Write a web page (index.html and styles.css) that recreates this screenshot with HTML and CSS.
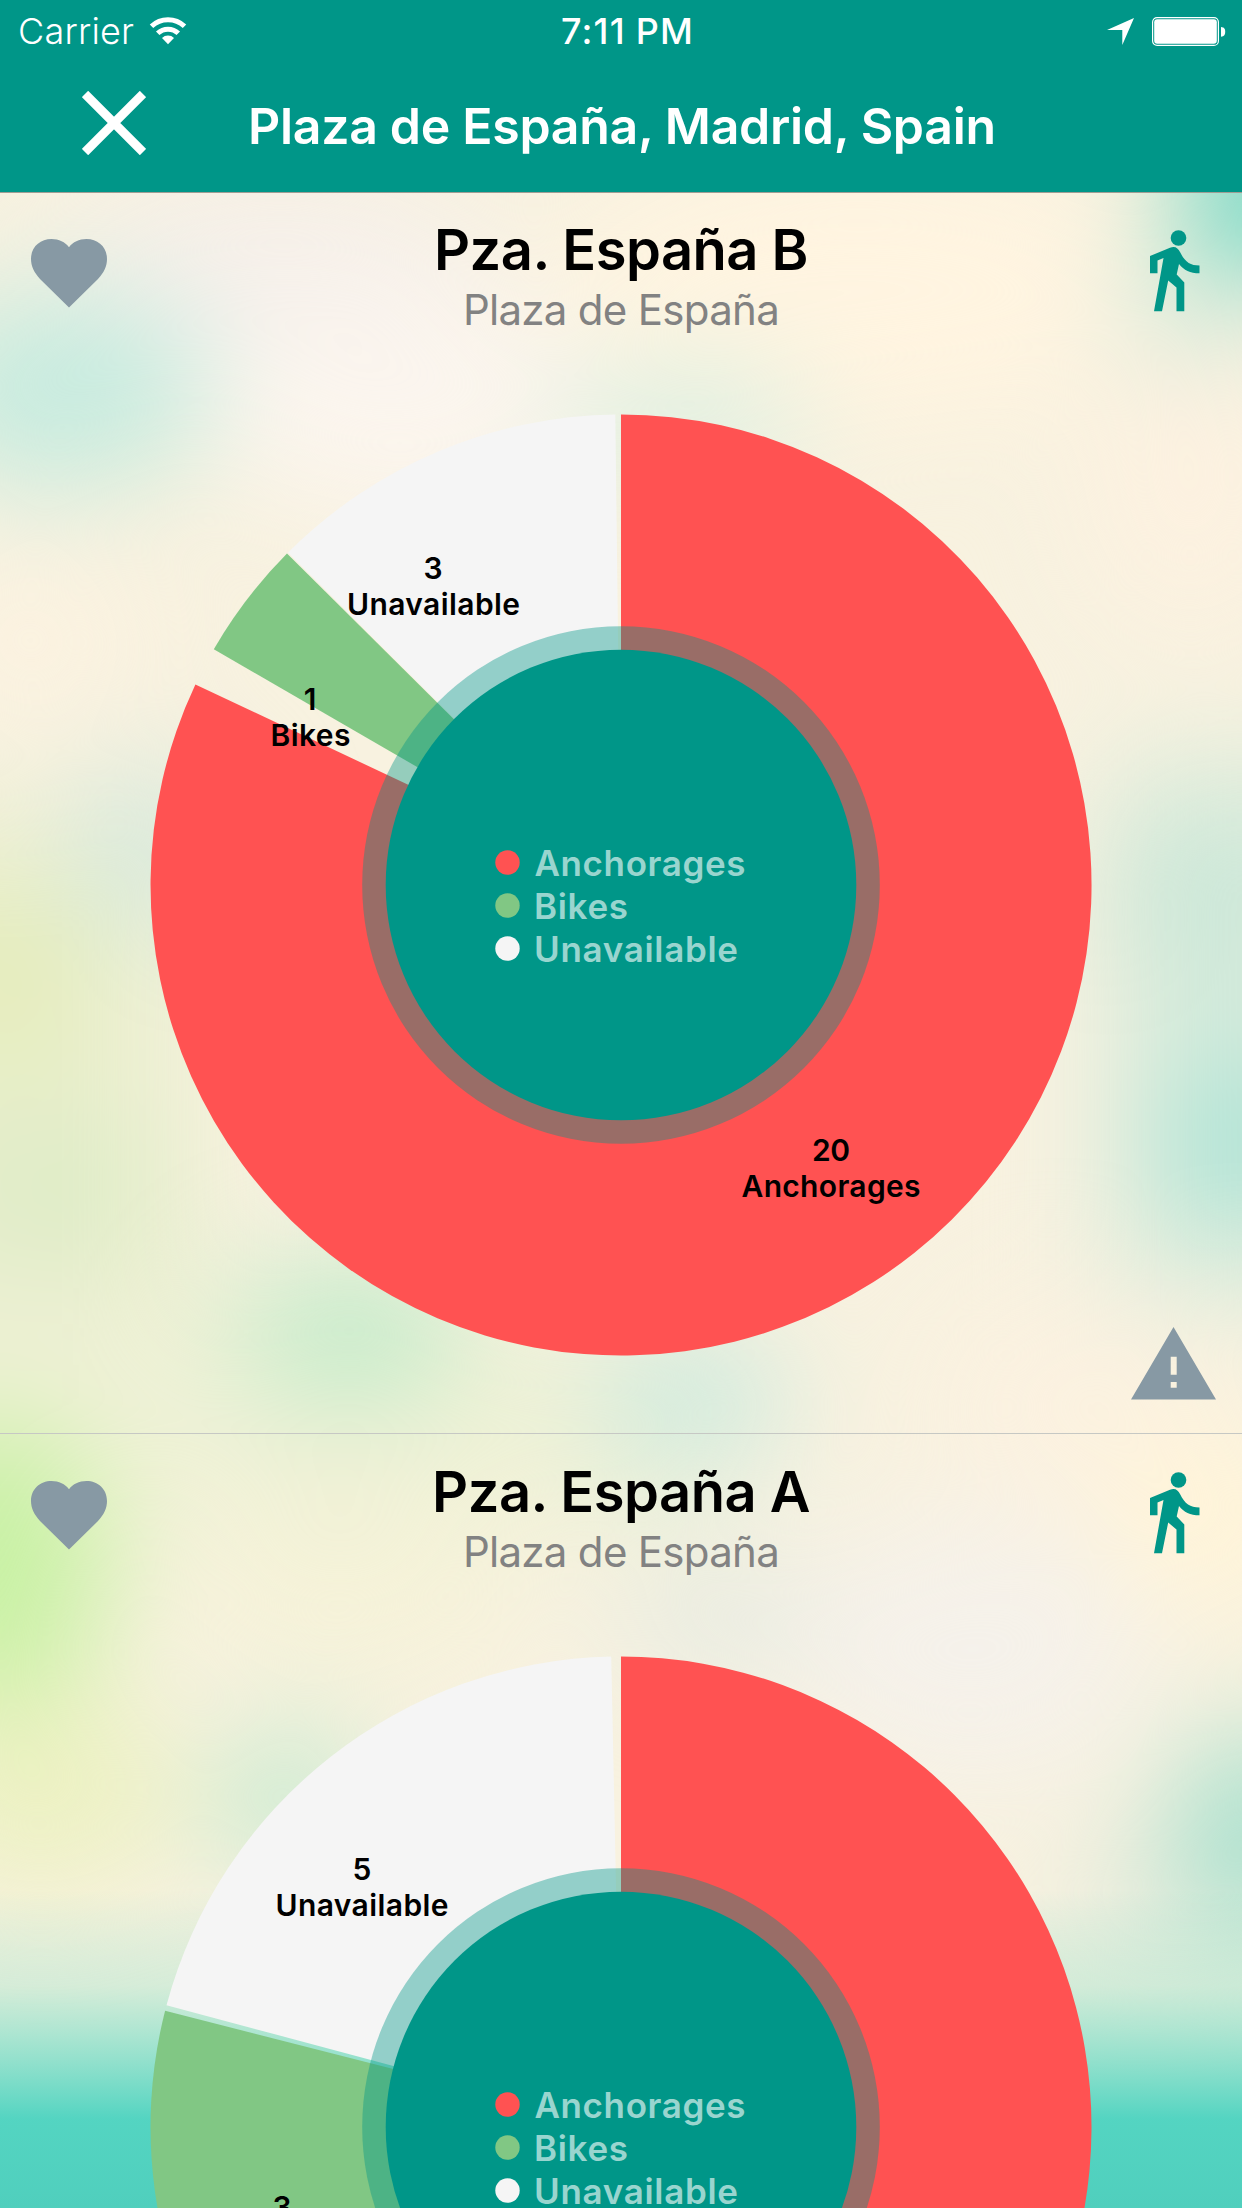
FILE: index.html
```html
<!DOCTYPE html>
<html lang="en">
<head>
<meta charset="utf-8">
<title>Plaza de España, Madrid, Spain</title>
<link rel="stylesheet" href="styles.css">
</head>
<body>
<div class="app">
  <header class="header">
    <div class="status">
      <div class="status-left">
        <span class="carrier">Carrier</span>
        <svg class="wifi" width="38" height="28" viewBox="0 0 38 28">
          <path class="arc" d="M2.500 9.300a24 24 0 0 1 33 0M8.700 16.300a15 15 0 0 1 20.600 0"/>
          <path class="fill" d="M19 27.300l-6-6.300a8.600 8.600 0 0 1 12 0z"/>
        </svg>
      </div>
      <span class="time">7:11 PM</span>
      <div class="status-right">
        <svg width="27" height="27" viewBox="0 0 27 27"><path class="fill" d="M0 12L27 0 15.300 27V12z"/></svg>
        <svg width="74" height="29" viewBox="0 0 74 29">
          <rect class="cell" x=".6" y=".6" width="65.800" height="27.800" rx="4.500"/>
          <rect class="fill" x="2.200" y="2.200" width="62.600" height="24.600" rx="3"/>
          <path class="fill" d="M69 10c3.200.2 4.200 2 4.200 4.700S72.200 19.500 69 19.700z"/>
        </svg>
      </div>
    </div>
    <div class="navbar">
      <svg class="close" width="64" height="64" viewBox="0 0 64 64"><path d="M3 3l58 58M61 3L3 61"/></svg>
      <h1 class="title">Plaza de España, Madrid, Spain</h1>
    </div>
  </header>

  <main class="list">
    <svg class="backdrop" width="1242" height="2016" viewBox="0 192 1242 2016">
      <defs>
        <filter id="soft" filterUnits="userSpaceOnUse" x="-300" y="-100" width="1842" height="2500" color-interpolation-filters="sRGB"><feGaussianBlur stdDeviation="58"/></filter>
        <linearGradient id="sea" x1="0" y1="0" x2="0" y2="1">
          <stop offset="0" stop-color="#4fd3bf" stop-opacity="0"/>
          <stop offset=".3" stop-color="#6fdcc4" stop-opacity=".25"/>
          <stop offset=".72" stop-color="#4bd3c0" stop-opacity=".95"/>
          <stop offset="1" stop-color="#50cfbd"/>
        </linearGradient>
      </defs>
      <rect x="0" y="192" width="1242" height="2016" fill="#f8f2e0"/>
      <g filter="url(#soft)">
        <rect x="-200" y="800" width="400" height="600" fill="#ecefd2"/>
        <rect x="1110" y="760" width="400" height="540" fill="#dcecdc"/>
        <rect x="-200" y="1330" width="900" height="200" fill="#eff1d6"/>
        <ellipse cx="280" cy="270" rx="220" ry="90" fill="#f5efea"/>
        <ellipse cx="400" cy="400" rx="200" ry="110" fill="#fbf5ee"/>
        <ellipse cx="860" cy="290" rx="300" ry="130" fill="#fff4e0"/>
        <ellipse cx="1190" cy="480" rx="110" ry="150" fill="#fcf1e0"/>
        <ellipse cx="60" cy="390" rx="150" ry="100" fill="#c6ebdf"/>
        <ellipse cx="1270" cy="190" rx="90" ry="80" fill="#68d5c2"/>
        <ellipse cx="1190" cy="310" rx="80" ry="50" fill="#d8eadb"/>
        <ellipse cx="680" cy="420" rx="130" ry="50" fill="#d8efe2"/>
        <ellipse cx="30" cy="640" rx="110" ry="90" fill="#fbf2e0"/>
        <ellipse cx="150" cy="850" rx="90" ry="90" fill="#d8e9dc"/>
        <ellipse cx="1200" cy="900" rx="100" ry="100" fill="#cbe7d8"/>
        <ellipse cx="1240" cy="1140" rx="90" ry="90" fill="#aee3d6"/>
        <ellipse cx="0" cy="980" rx="90" ry="100" fill="#e5edba"/>
        <ellipse cx="50" cy="1190" rx="120" ry="80" fill="#deecc6"/>
        <ellipse cx="350" cy="1330" rx="120" ry="70" fill="#c3ebca"/>
        <ellipse cx="690" cy="1400" rx="100" ry="70" fill="#cdeade"/>
        <ellipse cx="1080" cy="1400" rx="150" ry="110" fill="#fbf1e0"/>
        <ellipse cx="-10" cy="1570" rx="120" ry="150" fill="#c8f1a4"/>
        <ellipse cx="40" cy="1790" rx="140" ry="100" fill="#ecf1c2"/>
        <ellipse cx="340" cy="1590" rx="170" ry="80" fill="#f5f2d8"/>
        <ellipse cx="730" cy="1620" rx="120" ry="60" fill="#e6ebe2"/>
        <ellipse cx="970" cy="1650" rx="180" ry="130" fill="#f5f1ea"/>
        <ellipse cx="290" cy="1800" rx="80" ry="70" fill="#c6ead0"/>
        <ellipse cx="1210" cy="1520" rx="110" ry="90" fill="#fff4d8"/>
        <ellipse cx="1260" cy="1840" rx="90" ry="110" fill="#a8e0ce"/>
        <ellipse cx="1130" cy="1900" rx="60" ry="70" fill="#e4ebdc"/>
      </g>
      <rect x="0" y="1890" width="1242" height="318" fill="url(#sea)"/>
    </svg>

    <section class="station">
      <div class="station-head">
        <svg class="heart" width="76" height="69" viewBox="0 0 76 69"><path d="M38 68.600L9 40C3 33.500 0 27 0 20 0 8 9 0 20.500 0 28 0 34 3 38 8.200 42 3 48 0 55.500 0 67 0 76 8 76 20c0 7-3 13.500-9 20z"/></svg>
        <div class="names">
          <h2 class="name">Pza. España B</h2>
          <p class="place">Plaza de España</p>
        </div>
        <svg class="walk" width="50" height="82" viewBox="0 0 50 82"><circle cx="28.500" cy="8" r="7.800"/><path d="M0 26l20-8.300c5-2 8 .3 10 4.300 5 10 10 13.500 19.500 13.500v7.800c-9.500 0-15.500-3-20.500-9.300l-2.300 10.600 7.600 8V81.300h-7.800V57.500L18.200 50.500 12 81.300H4L13.500 28l-6 2.500V43.300H0z"/></svg>
      </div>
      <svg class="chart" width="942" height="942" viewBox="-471 -471 942 942">
        <path class="red" d="M0 0V-470.500A470.500 470.500 0 1 1 -425.600 -200.500Z"/>
        <path class="green" d="M0 0L-407.200 -235.700A470.500 470.500 0 0 1 -334 -331.400Z"/>
        <path class="white" d="M0 0L-333 -332.400A470.500 470.500 0 0 1 -5.700 -470.500Z"/>
        <circle class="halo" r="258.800"/>
        <circle class="hole" r="235.300"/>
        <g class="label">
          <text x="-188" y="-306">3</text><text x="-187.500" y="-270.500" textLength="173">Unavailable</text>
          <text x="-311" y="-175.500">1</text><text x="-310.500" y="-139.500" textLength="80">Bikes</text>
          <text x="210" y="276" textLength="38">20</text><text x="210" y="312" textLength="179">Anchorages</text>
        </g>
        <g class="legend">
          <circle class="red" cx="-113.500" cy="-22.500" r="12.200"/><text x="-86.500" y="-9.500" textLength="211">Anchorages</text>
          <circle class="green" cx="-113.500" cy="20.500" r="12.200"/><text x="-87" y="33.500" textLength="94">Bikes</text>
          <circle class="white" cx="-113.500" cy="63.500" r="12.200"/><text x="-87" y="76.500" textLength="204">Unavailable</text>
        </g>
      </svg>
      <svg class="warn" width="85" height="73" viewBox="0 0 85 73"><path fill-rule="evenodd" d="M42.500 0L85 72.500H0zM39.700 29.800v18h6v-18zM39.700 55v5.700h6V55z"/></svg>
    </section>

    <section class="station">
      <div class="station-head">
        <svg class="heart" width="76" height="69" viewBox="0 0 76 69"><path d="M38 68.600L9 40C3 33.500 0 27 0 20 0 8 9 0 20.500 0 28 0 34 3 38 8.200 42 3 48 0 55.500 0 67 0 76 8 76 20c0 7-3 13.500-9 20z"/></svg>
        <div class="names">
          <h2 class="name">Pza. España A</h2>
          <p class="place">Plaza de España</p>
        </div>
        <svg class="walk" width="50" height="82" viewBox="0 0 50 82"><circle cx="28.500" cy="8" r="7.800"/><path d="M0 26l20-8.300c5-2 8 .3 10 4.300 5 10 10 13.500 19.500 13.500v7.800c-9.500 0-15.500-3-20.500-9.300l-2.300 10.600 7.600 8V81.300h-7.800V57.500L18.200 50.500 12 81.300H4L13.500 28l-6 2.500V43.300H0z"/></svg>
      </div>
      <svg class="chart" width="942" height="942" viewBox="-471 -471 942 942">
        <path class="red" d="M0 0V-470.500A470.500 470.500 0 1 1 -411 229Z"/>
        <path class="green" d="M0 0L-407.500 235.200A470.500 470.500 0 0 1 -455.900 -116.200Z"/>
        <path class="white" d="M0 0L-454.500 -121.800A470.500 470.500 0 0 1 -9.800 -470.400Z"/>
        <circle class="halo" r="258.800"/>
        <circle class="hole" r="235.300"/>
        <g class="label">
          <text x="-259" y="-247.500">5</text><text x="-259" y="-211.500" textLength="173">Unavailable</text>
          <text x="-339" y="90.500">3</text>
        </g>
        <g class="legend">
          <circle class="red" cx="-113.500" cy="-22.500" r="12.200"/><text x="-86.500" y="-9.500" textLength="211">Anchorages</text>
          <circle class="green" cx="-113.500" cy="20.500" r="12.200"/><text x="-87" y="33.500" textLength="94">Bikes</text>
          <circle class="white" cx="-113.500" cy="63.500" r="12.200"/><text x="-87" y="76.500" textLength="204">Unavailable</text>
        </g>
      </svg>
    </section>
  </main>
</div>
</body>
</html>
```
FILE: styles.css
```css
* { box-sizing: border-box; margin: 0; padding: 0; }

body {
  width: 1242px;
  height: 2208px;
  overflow: hidden;
  font-family: Inter, "Liberation Sans", sans-serif;
  color: #000;
}

.app {
  display: flex;
  flex-direction: column;
  height: 2208px;
  overflow: hidden;
}

svg { display: block; flex: none; }

.header {
  position: relative;
  z-index: 1;
  flex: none;
  height: 193px;
  margin-bottom: -1px;
  background: #009688;
  border-bottom: 1px solid #a09d94;
  color: #fff;
}

.status {
  display: grid;
  grid-template-columns: 1fr auto 1fr;
  align-items: center;
  height: 62px;
  padding: 0 16px 0 18px;
  font-size: 36px;
  line-height: 62px;
}

.status-left, .status-right { display: flex; align-items: center; height: 62px; }
.status-left { gap: 15px; }
.status-right { justify-content: flex-end; gap: 18px; }
.carrier { font-weight: 350; letter-spacing: 0.2px; }
.time { padding-left: 11px; font-weight: 500; white-space: nowrap; letter-spacing: 1.2px; word-spacing: -1px; }
.fill { fill: #fff; }
.arc { fill: none; stroke: #fff; stroke-width: 5; }
.cell { fill: none; stroke: #fff; stroke-width: 1.2; }

.navbar {
  display: flex;
  align-items: center;
  height: 129px;
  padding-left: 82px;
}
.close { margin-top: -7px; }
.close path { stroke: #fff; stroke-width: 9; }
.title {
  margin-left: 102px;
  margin-top: -2px;
  font-size: 50px;
  font-weight: 600;
  letter-spacing: -0.3px;
  white-space: nowrap;
}

.list { position: relative; flex: 1; overflow: hidden; }
.backdrop { position: absolute; left: 0; top: 0; z-index: -1; }

.station {
  display: flex;
  flex-direction: column;
  align-items: center;
  height: 1242px;
  border-bottom: 1px solid #c6c8c4;
}
.station-head {
  display: grid;
  grid-template-columns: 1fr auto 1fr;
  width: 100%;
  height: 221.500px;
  padding: 0 42px 0 31px;
}
.heart { margin-top: 47px; fill: #8799a4; }
.walk { justify-self: end; margin-top: 38px; fill: #009688; }
.names { padding: 23px 0 0; margin-left: 11px; text-align: center; white-space: nowrap; }
.name { font-size: 56px; font-weight: 600; line-height: 70px; letter-spacing: -0.5px; }
.place { margin-top: -1px; font-size: 42px; font-weight: 400; line-height: 52px; letter-spacing: -0.7px; color: #828282; }
.warn { align-self: flex-end; margin: -29px 26px 0 0; fill: #8799a4; }

.red { fill: #ff5252; }
.green { fill: #81c784; }
.white { fill: #f5f5f5; }
.halo { fill: #009688; fill-opacity: 0.4; }
.hole { fill: #009688; }
.label { font-size: 30px; font-weight: 600; text-anchor: middle; }
.legend { font-size: 35px; font-weight: 600; }
.legend text { fill: #99d5cf; }
```
